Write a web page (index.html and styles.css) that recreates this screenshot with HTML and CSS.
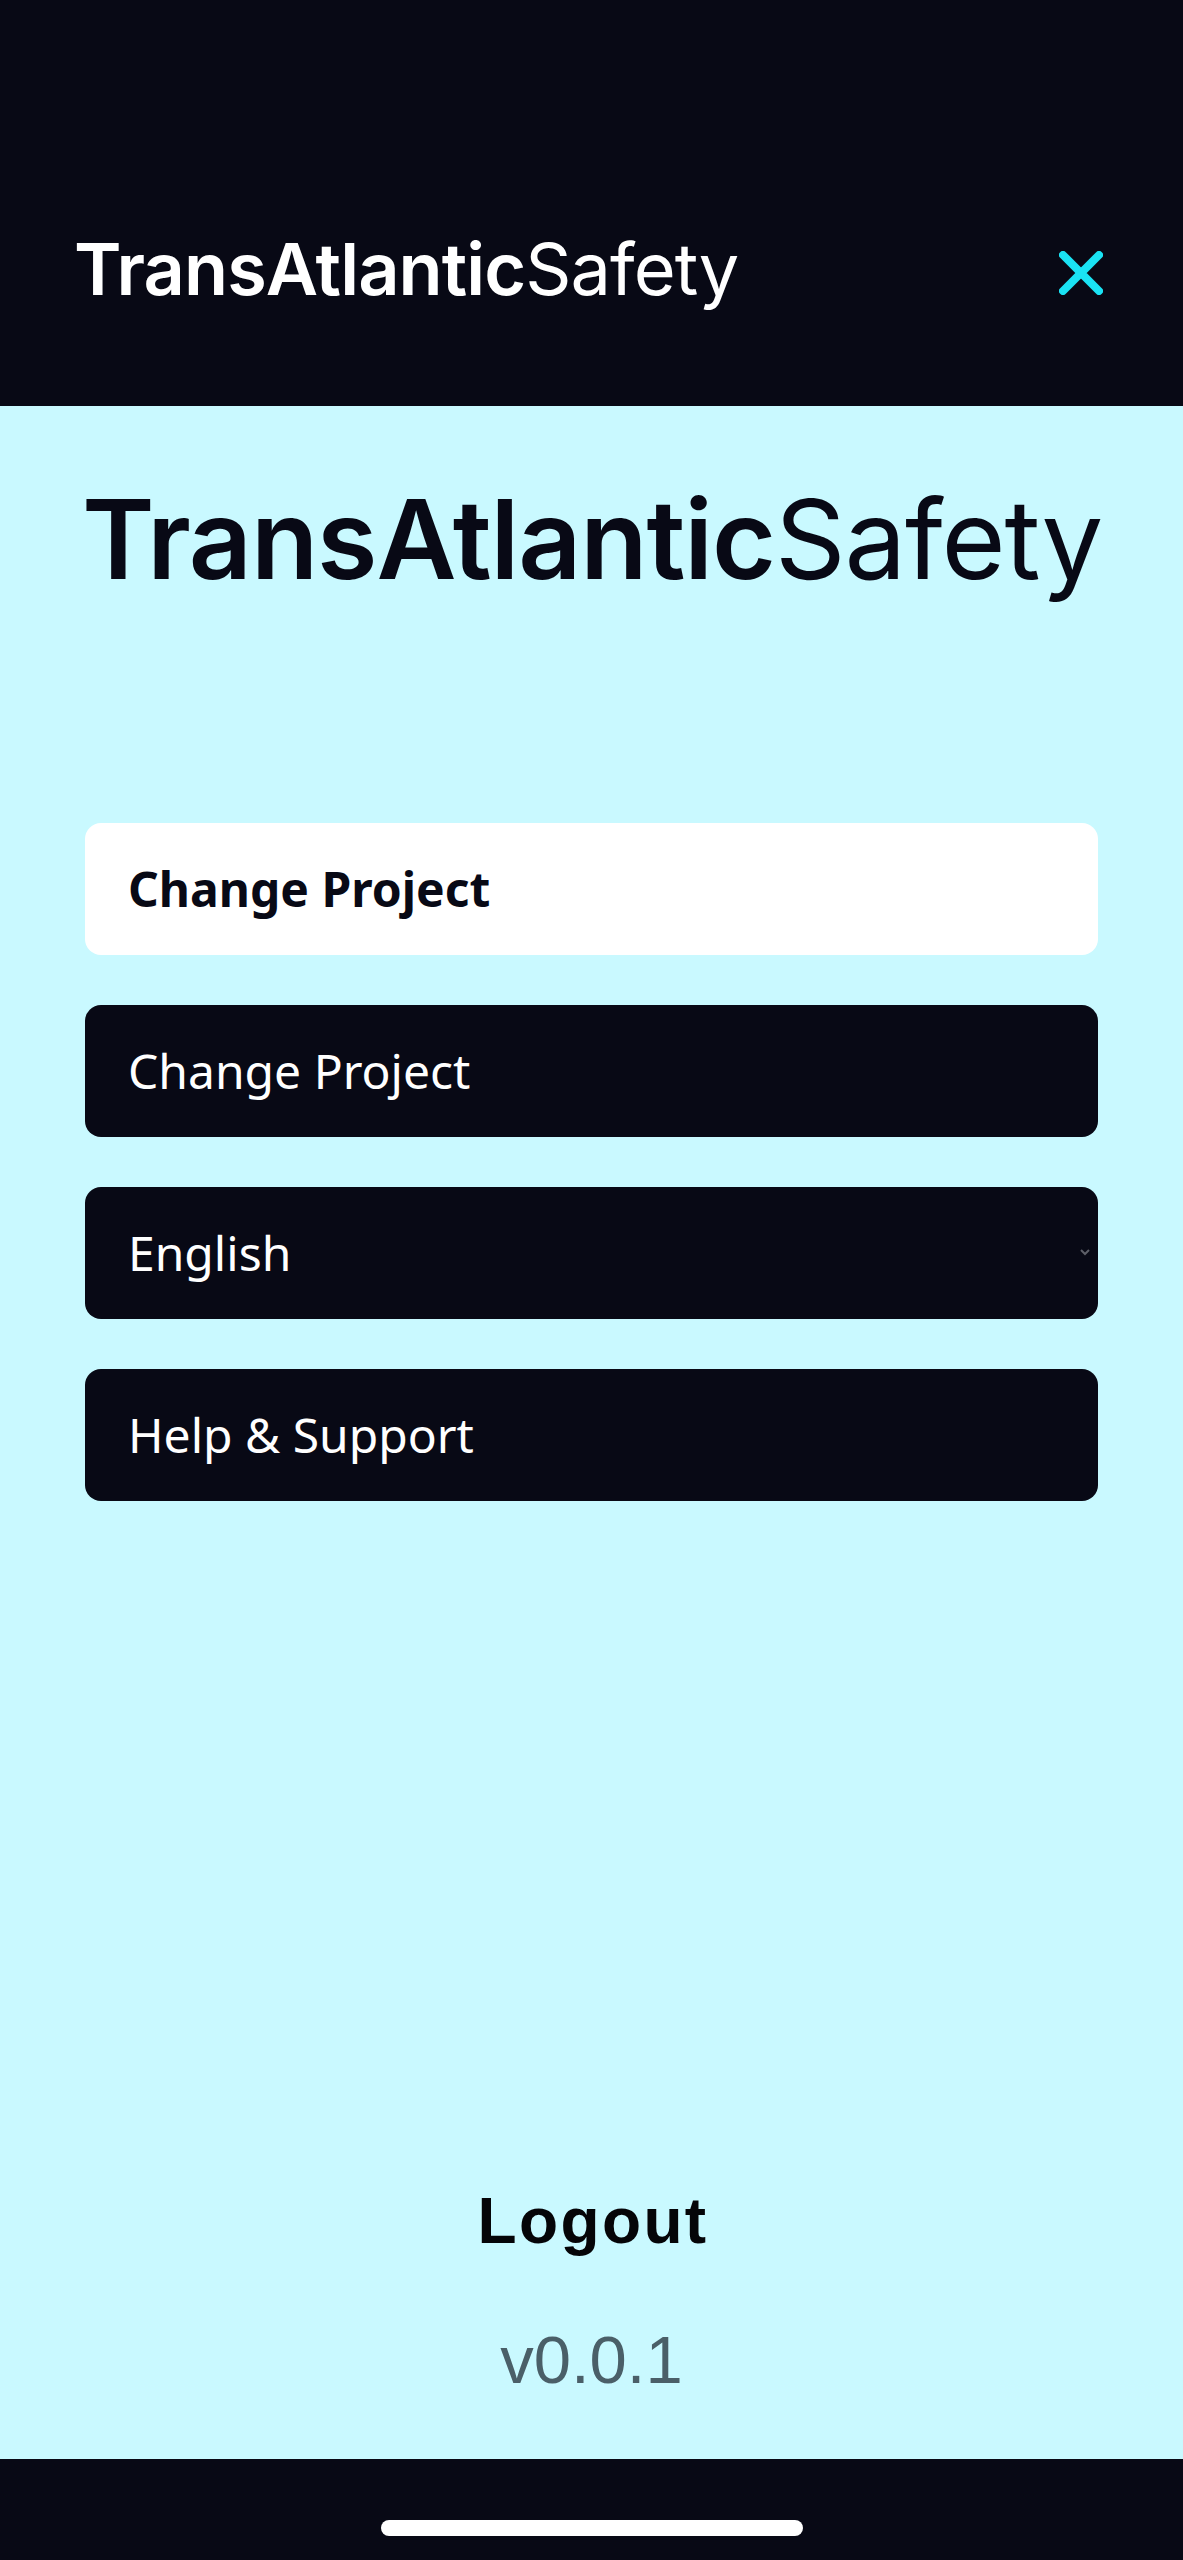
FILE: index.html
```html
<!DOCTYPE html>
<html lang="en">
<head>
    <meta charset="UTF-8">
    <title>TransAtlanticSafety</title>
    <link rel="stylesheet" href="styles.css">
</head>
<body>
<div class="page">
    <header class="topbar">
        <div class="logo logo-small">TransAtlantic<span class="logo-light">Safety</span></div>
        <button class="close" aria-label="Close">
            <svg width="44" height="44" viewBox="0 0 44 44"><path d="M4 4 L22 22 L40 4 M4 40 L22 22 L40 40" fill="none" stroke="#1ae3f4" stroke-width="8" stroke-linecap="round"/></svg>
        </button>
    </header>
    <main class="menu">
        <div class="logo logo-big">TransAtlantic<span class="logo-light">Safety</span></div>
        <ul class="list">
            <li class="item item-active">Change Project</li>
            <li class="item">Change Project</li>
            <li class="item item-select">
                <span>English</span>
                <svg width="10" height="7" viewBox="0 0 10 7"><path d="M1 1 L5 5 L9 1" fill="none" stroke="#5d5f68" stroke-width="2"/></svg>
            </li>
            <li class="item">Help &amp; Support</li>
        </ul>
        <a class="logout">Logout</a>
        <p class="version">v0.0.1</p>
    </main>
    <footer class="bottombar">
        <div class="home"></div>
    </footer>
</div>
</body>
</html>
```

FILE: styles.css
```css
*{
    margin: 0;
    padding: 0;
    box-sizing: border-box;
}
ul{
    list-style: none;
}
body{
    background: #c9f9ff;
}
.page{
    height: 2560px;
    display: flex;
    flex-direction: column;
}
.topbar{
    height: 406px;
    background: #080915;
    display: flex;
    justify-content: space-between;
    align-items: flex-start;
    padding: 226px 80px 0 74px;
}
.close{
    background: none;
    border: 0;
    margin-top: 25px;
    display: block;
}
.close svg{
    display: block;
}
.logo{
    font-family: Inter, sans-serif;
    font-weight: 600;
    white-space: nowrap;
}
.logo-light{
    font-weight: 400;
}
.logo-small{
    color: #fff;
    font-size: 72px;
    line-height: 86px;
    letter-spacing: -0.9px;
}
.logo-big{
    color: #080915;
    font-size: 110px;
    line-height: 132px;
    letter-spacing: -1.1px;
    margin-left: -3px;
}
.menu{
    flex: 1;
    display: flex;
    flex-direction: column;
    padding: 67px 85px 0;
}
.list{
    margin-top: 218px;
    display: flex;
    flex-direction: column;
    gap: 50px;
}
.item{
    height: 132px;
    background: #080915;
    color: #fff;
    border-radius: 16px;
    padding: 0 8px 2px 43px;
    font-family: "Noto Sans", sans-serif;
    font-size: 48px;
    display: flex;
    align-items: center;
    justify-content: space-between;
}
.item-active{
    background: #fff;
    color: #080915;
    font-weight: 700;
}
.logout{
    margin-top: auto;
    font-family: "Liberation Sans", sans-serif;
    font-weight: 700;
    font-size: 64px;
    letter-spacing: 2.4px;
    text-indent: 3px;
    line-height: 72px;
    color: #050508;
    text-align: center;
}
.version{
    margin-top: 66px;
    margin-bottom: 62px;
    font-family: "Liberation Sans", sans-serif;
    font-size: 67px;
    line-height: 74px;
    color: #4a5f68;
    text-align: center;
}
.bottombar{
    height: 101px;
    background: #080915;
    padding-top: 61px;
}
.home{
    width: 422px;
    height: 16px;
    margin-left: 381px;
    background: #fff;
    border-radius: 8px;
}
```
